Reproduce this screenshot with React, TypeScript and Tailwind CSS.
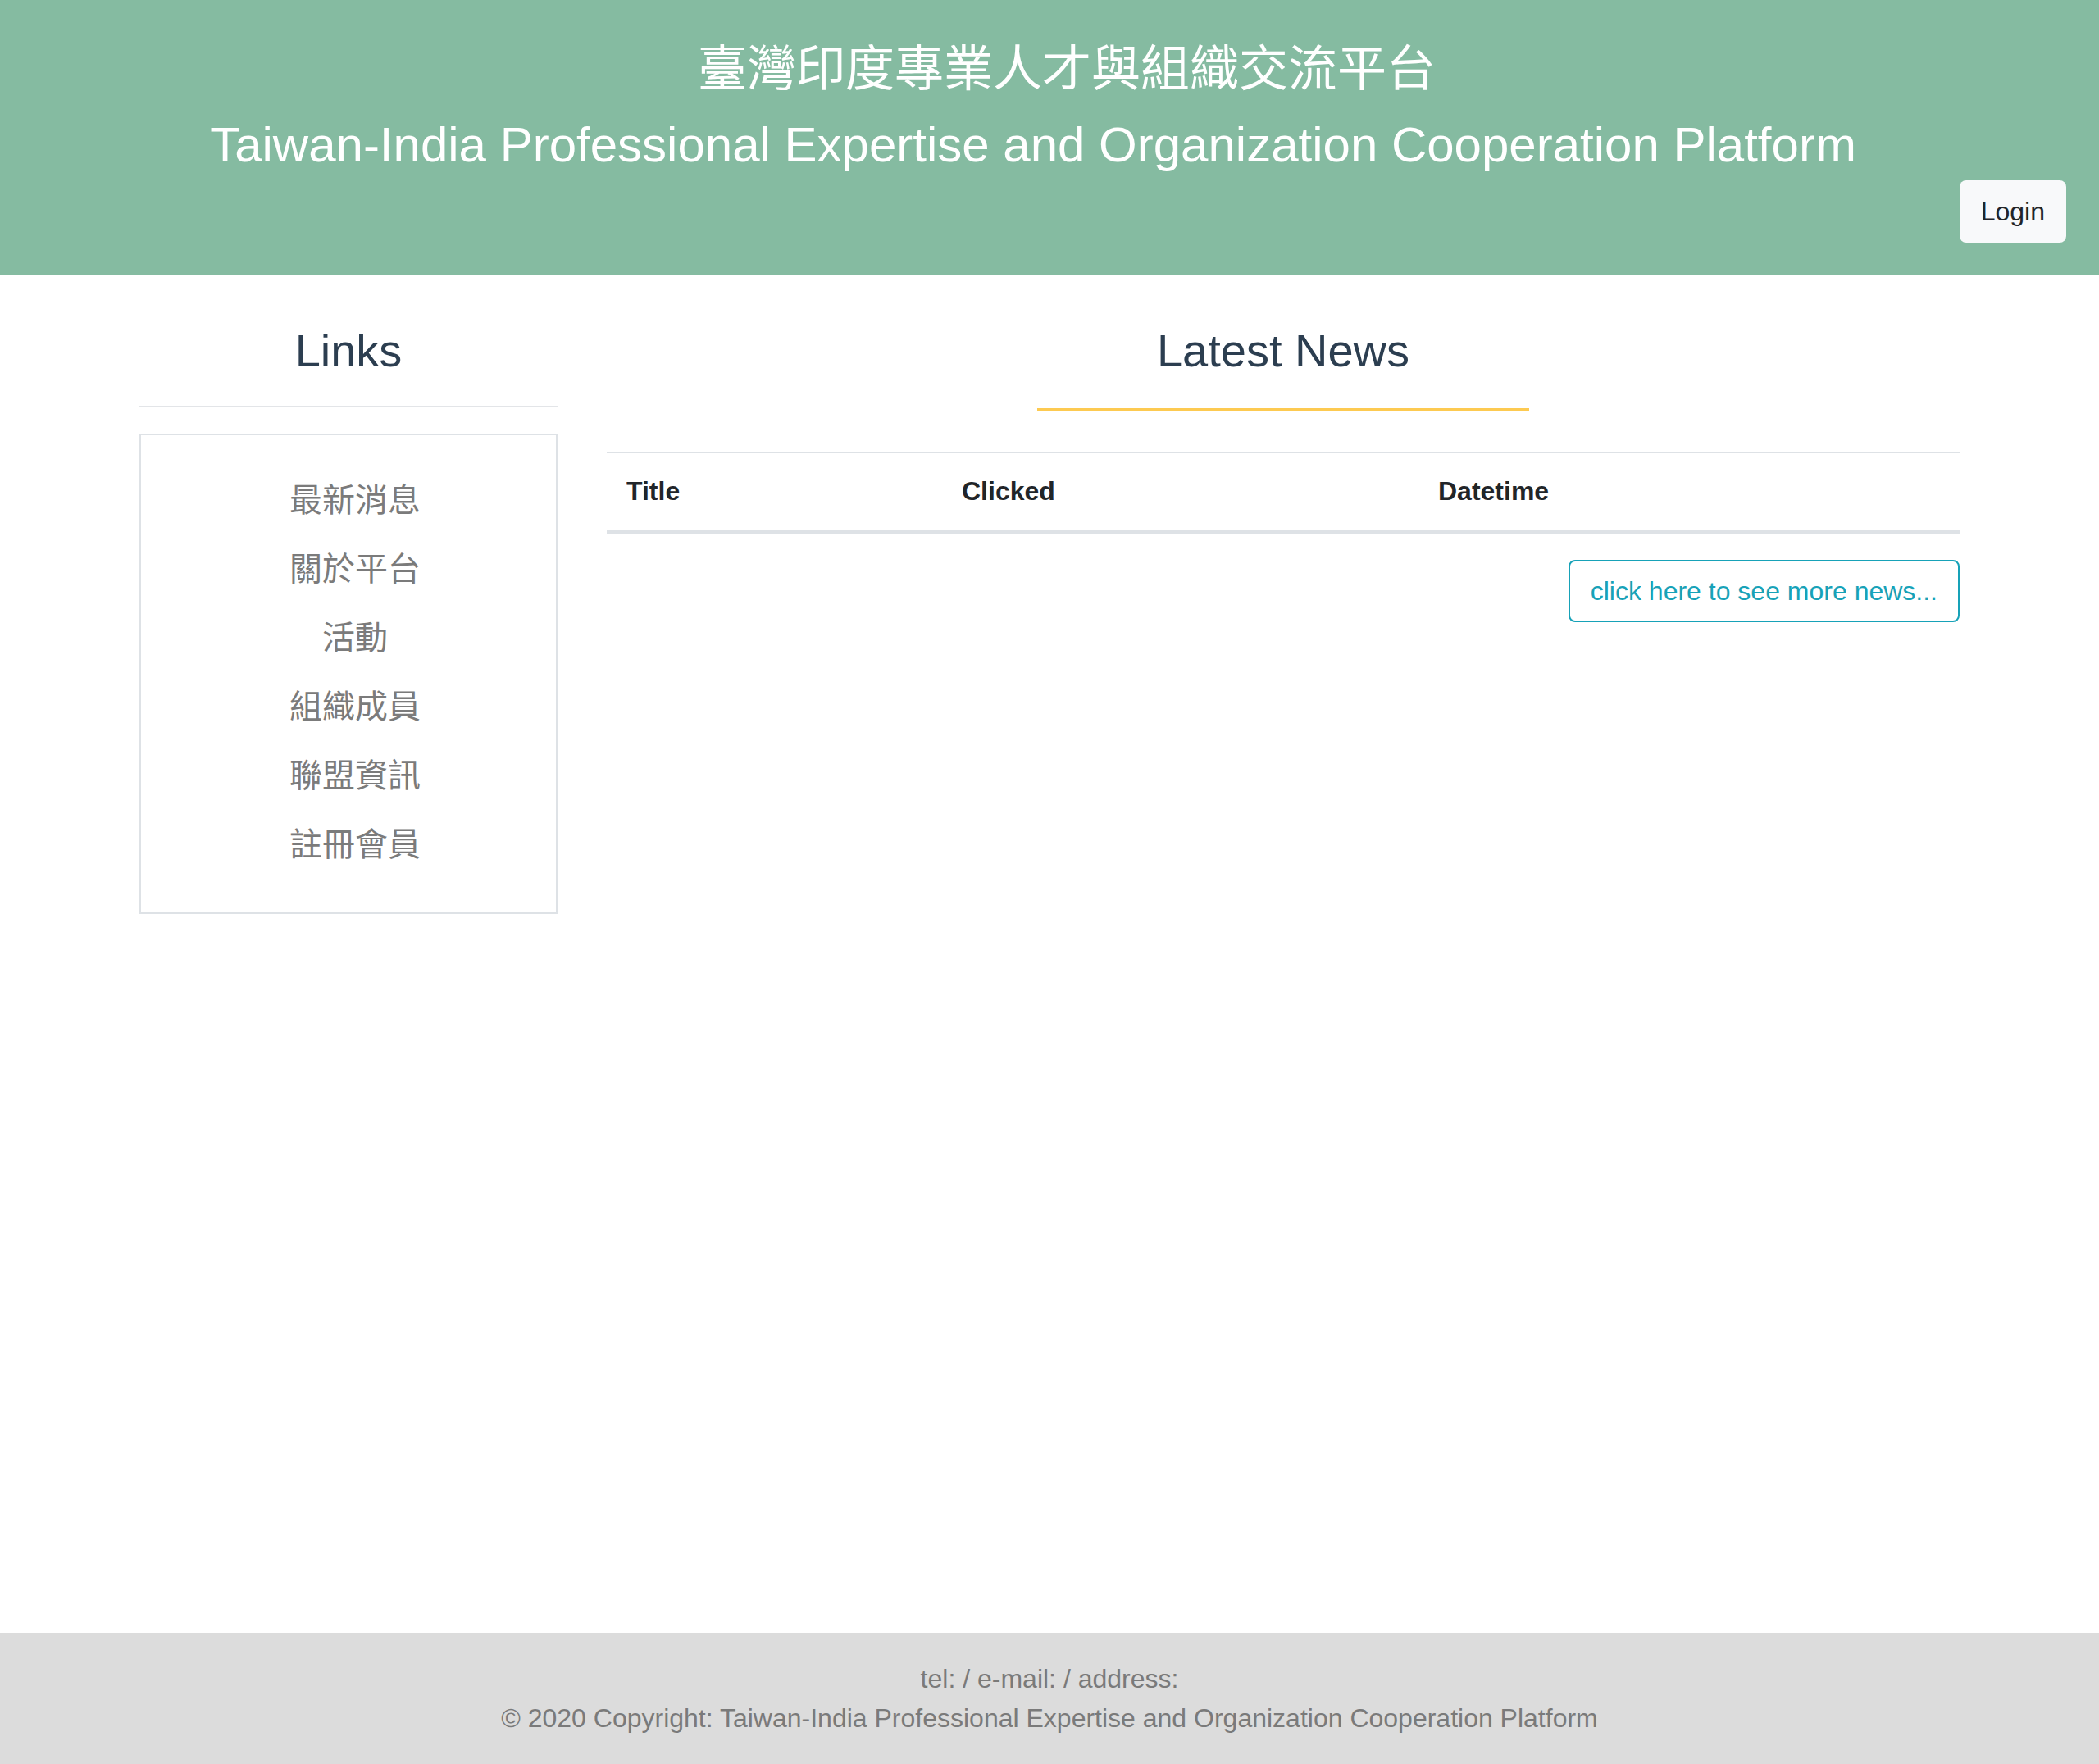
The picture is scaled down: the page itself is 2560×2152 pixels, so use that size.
const links = ["最新消息", "關於平台", "活動", "組織成員", "聯盟資訊", "註冊會員"];

export default function App() {
  return (
    <div className="min-h-screen flex flex-col bg-white font-['Liberation_Sans','Noto_Sans_CJK_TC',sans-serif]">
      {/* Header */}
      <header className="bg-[#85bba1] text-white pt-[49px] pb-[40px]">
        <div className="pr-[40px] text-center">
          <h1 className="pl-[82px] text-[60px] leading-[72px] font-normal">臺灣印度專業人才與組織交流平台</h1>
          <h2 className="mt-[20px] text-[60px] leading-[72px] font-normal">
            Taiwan-India Professional Expertise and Organization Cooperation Platform
          </h2>
        </div>
        <div className="mt-[7px] flex justify-end pr-[40px]">
          <button className="h-[76px] px-[26px] rounded-[8px] bg-[#f8f9fa] text-[#212529] text-[32px] leading-[48px]">
            Login
          </button>
        </div>
      </header>

      {/* Content */}
      <main className="w-[2220px] mx-auto pt-[58px] flex gap-[60px] items-start">
        <aside className="w-[510px]">
          <h3 className="text-center text-[56px] leading-[67px] text-[#2c3e50]">Links</h3>
          <div className="mt-[34px] h-[2px] bg-[#e3e5e8]"></div>
          <ul className="mt-[32px] border-2 border-[#dee2e6] pt-[37px] pb-[41px] pl-[16px]">
            {links.map((l) => (
              <li key={l} className="h-[84px] flex items-center justify-center text-[40px] text-[#7b7b7b]">
                {l}
              </li>
            ))}
          </ul>
        </aside>

        <section className="flex-1">
          <h3 className="text-center text-[56px] leading-[67px] text-[#2c3e50]">Latest News</h3>
          <div className="mx-auto mt-[37px] w-[600px] h-[4px] bg-[#fdca51]"></div>

          <div className="mt-[49px] grid grid-cols-[409px_581px_1fr] border-t-2 border-b-4 border-[#dee2e6] text-[32px] leading-[48px] font-bold text-[#212529]">
            <div className="px-[24px] pt-[22px] pb-[24px]">Title</div>
            <div className="px-[24px] pt-[22px] pb-[24px]">Clicked</div>
            <div className="px-[24px] pt-[22px] pb-[24px]">Datetime</div>
          </div>

          <div className="mt-[32px] flex justify-end">
            <button className="h-[76px] px-[25px] border-2 border-[#17a2b8] rounded-[8px] text-[#17a2b8] text-[32px] leading-[48px]">
              click here to see more news...
            </button>
          </div>
        </section>
      </main>

      {/* Footer */}
      <footer className="mt-auto bg-[#dcdcdc] py-[32px] text-center text-[32px] leading-[48px] text-[#7a7a7a]">
        <p>tel: / e-mail: / address:</p>
        <p>© 2020 Copyright: Taiwan-India Professional Expertise and Organization Cooperation Platform</p>
      </footer>
    </div>
  );
}
